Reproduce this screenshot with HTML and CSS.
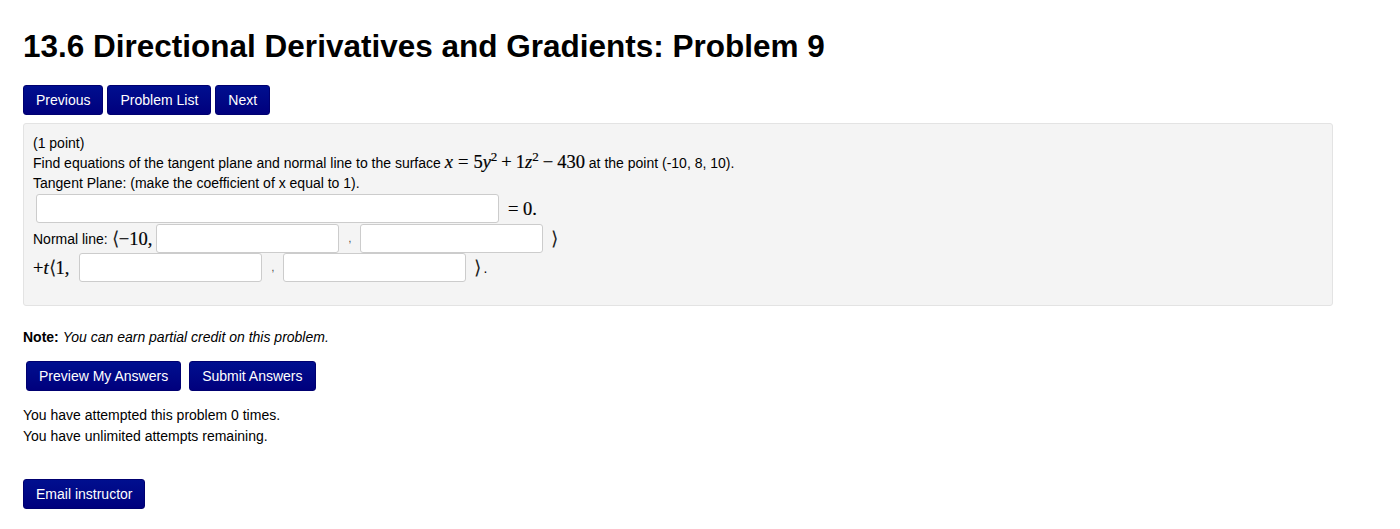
FILE: index.html
```html
<!DOCTYPE html>
<html>
<head>
<meta charset="utf-8">
<link rel="stylesheet" href="styles.css">
</head>
<body>
<div class="page">
  <h1 class="title">13.6 Directional Derivatives and Gradients: Problem 9</h1>
  <div class="nav">
    <button class="btn">Previous</button>
    <button class="btn">Problem List</button>
    <button class="btn">Next</button>
  </div>
  <div class="well">
    <div class="line">(1 point)</div>
    <div class="line">Find equations of the tangent plane and normal line to the surface <span class="math inline"><i>x</i><span class="rel">=</span>5<i>y</i><sup>2</sup><span class="op">+</span>1<i>z</i><sup>2</sup><span class="op">−</span>430</span> at the point (-10, 8, 10).</div>
    <div class="line">Tangent Plane: (make the coefficient of x equal to 1).</div>
    <div class="row row-first">
      <input class="ans ans-wide" type="text">
      <span class="math eq">= 0.</span>
    </div>
    <div class="row">
      <span class="label">Normal line:</span>
      <span class="math lead"><span class="br">⟨</span>−10,</span>
      <input class="ans" type="text">
      <span class="comma">,</span>
      <input class="ans" type="text">
      <span class="math close br">⟩</span>
    </div>
    <div class="row">
      <span class="math lead2">+<i>t</i><span class="br">⟨</span>1,</span>
      <input class="ans" type="text">
      <span class="comma">,</span>
      <input class="ans" type="text">
      <span class="math close br">⟩</span><span class="dot">.</span>
    </div>
  </div>
  <p class="note"><b>Note:</b> <i>You can earn partial credit on this problem.</i></p>
  <div class="actions">
    <button class="btn">Preview My Answers</button>
    <button class="btn">Submit Answers</button>
  </div>
  <p class="attempts">You have attempted this problem 0 times.<br>You have unlimited attempts remaining.</p>
  <button class="btn email">Email instructor</button>
</div>
</body>
</html>
```
FILE: styles.css
```css
html, body {
  margin: 0;
  padding: 0;
  background: #fff;
}
body {
  font-family: "Liberation Sans", Arial, sans-serif;
  font-size: 14px;
  color: #000;
}
.page {
  padding: 0 0 0 23px;
  width: 1310px;
}
.title {
  margin: 0;
  padding-top: 27px;
  font-size: 31.5px;
  line-height: 38px;
  font-weight: bold;
}
.nav {
  display: flex;
  gap: 4px;
  margin-top: 20px;
}
.btn {
  font-family: "Liberation Sans", Arial, sans-serif;
  font-size: 14px;
  color: #fff;
  background: linear-gradient(#000f8f, #00007d);
  border: 1px solid #000070;
  border-radius: 3px;
  height: 30px;
  padding: 0 12px;
  line-height: 28px;
  cursor: pointer;
}
.well {
  margin-top: 8px;
  background: #f4f4f4;
  border: 1px solid #e3e3e3;
  border-radius: 3px;
  padding: 9px 9px 23px 9px;
  font-size: 14px;
  line-height: 20px;
}
.line {
  height: 20px;
}
.math {
  font-family: "Liberation Serif", "Times New Roman", serif;
  font-size: 18.5px;
  -webkit-text-stroke: 0.2px #000;
}
.inline {
  line-height: 0;
}
.math sup {
  font-size: 13px;
  line-height: 0;
}
.rel { margin: 0 5px; }
.op { margin: 0 4px; }
.br {
  -webkit-text-stroke: 0;
  font-weight: 300;
  color: #222;
}
.row {
  display: flex;
  align-items: center;
  height: 29px;
}
.row-first {
  padding-left: 3px;
  height: 31px;
}
.ans {
  box-sizing: border-box;
  width: 183px;
  height: 29px;
  border: 1px solid #ccc;
  border-radius: 3px;
  background: #fff;
  margin: 0;
}
.ans-wide {
  width: 463px;
}
.eq { margin-left: 9px; }
.label {
  margin-right: 4px;
}
.lead { margin-right: 4px; }
.lead2 { margin-right: 10px; }
.comma {
  font-size: 10px;
  width: 21px;
  text-align: center;
  color: #333;
}
.close { margin-left: 8px; }
.dot { margin-left: 2px; }
.note {
  margin: 21px 0 0 0;
  line-height: 20px;
}
.actions {
  display: flex;
  gap: 8px;
  margin: 14px 0 0 3px;
}
.attempts {
  margin: 14px 0 0 0;
  line-height: 21px;
}
.email {
  margin-top: 32px;
}
```
